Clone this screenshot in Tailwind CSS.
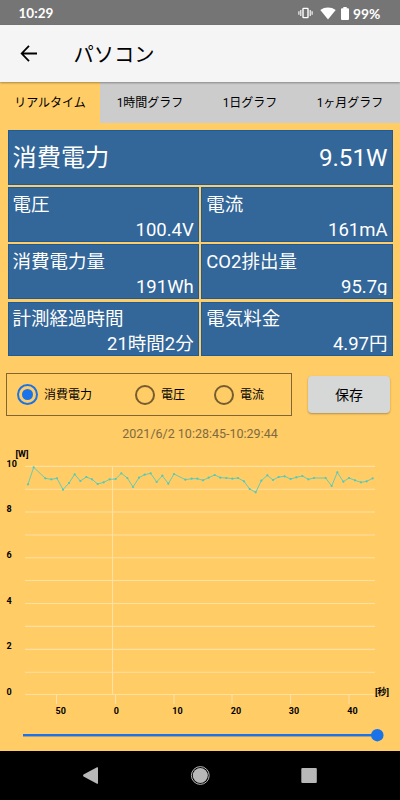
<!DOCTYPE html>
<html lang="ja">
<head>
<meta charset="utf-8">
<title>パソコン</title>
<script src="https://cdn.jsdelivr.net/npm/@tailwindcss/browser@4"></script>
</head>
<body class="w-[400px] h-[800px] overflow-hidden bg-[#ffcc66] flex flex-col font-[Roboto,'Noto_Sans_CJK_JP',sans-serif] text-black">
<header class="h-[25px] shrink-0 bg-[#757575] text-white flex items-center justify-between pl-[18.500px] pr-[18px] pt-[2px]">
  <span class="font-[Lato,sans-serif] font-bold text-[13.500px] leading-none">10:29</span>
  <div class="flex items-center">
    <svg class="w-[15px] h-[12px] mr-[7px]" viewBox="0 0 15 12" fill="none" stroke="#fff"><rect x="5" y="1.4" width="5" height="9.2" rx=".6" stroke-width="1.4"/><path d="M2.8 3v6M12.2 3v6M.9 4.3v3.4M14.1 4.3v3.4" stroke-width="1.1"/></svg>
    <svg class="w-[16px] h-[13px] mr-[5px]" viewBox="0 0 16 13" fill="#fff"><path d="M.3 3C4.8-.3 11.2-.3 15.700 3L8 12.500z"/></svg>
    <svg class="w-[8px] h-[13px] mr-[4px]" viewBox="0 0 8 13" fill="#fff"><path d="M2.300 0h3.400v1.300H7q1 0 1 1V12q0 1-1 1H1q-1 0-1-1V2.300q0-1 1-1h1.300z"/></svg>
    <span class="font-[Lato,sans-serif] font-bold text-[13.800px] leading-none w-[29px] whitespace-nowrap">99%</span>
  </div>
</header>
<div class="h-[57px] shrink-0 bg-[#f5f5f5] flex items-center pl-[20px] shadow-[0_1px_2px_rgba(0,0,0,.35)] relative">
  <svg class="w-[17px] h-[17px] mr-[36.500px]" viewBox="0 0 17 17" fill="none" stroke="#000" stroke-width="1.8"><path d="M9 .9L1.700 8.500L9 16.100M1.700 8.500H17"/></svg>
  <h1 class="text-[20.300px] leading-none pt-[3px]">パソコン</h1>
</div>
<nav class="h-[41px] shrink-0 grid grid-cols-4 bg-[#cccccc] text-[12px] leading-[42px] text-center">
  <span class="bg-[#ffcc66]">リアルタイム</span><span>1時間グラフ</span><span>1日グラフ</span><span>1ヶ月グラフ</span>
</nav>
<section class="mt-[7px] mx-[7.500px] shrink-0 grid grid-cols-2 gap-[2.500px] grid-rows-[54.700px_54.700px_54.700px_54.700px] text-white text-[18.500px]">
  <div class="col-span-2 bg-[#336699] border border-[#1d5c98] flex items-center justify-between px-[4px] pt-[2px] text-[24.200px] leading-none"><span>消費電力</span><span>9.51W</span></div>
  <div class="bg-[#336699] border border-[#1d5c98] px-[4px] pt-[5px] flex flex-col leading-[25px] overflow-hidden"><span>電圧</span><span class="text-right">100.4V</span></div>
  <div class="bg-[#336699] border border-[#1d5c98] px-[4px] pt-[5px] flex flex-col leading-[25px] overflow-hidden"><span>電流</span><span class="text-right">161mA</span></div>
  <div class="bg-[#336699] border border-[#1d5c98] px-[4px] pt-[5px] flex flex-col leading-[25px] overflow-hidden"><span>消費電力量</span><span class="text-right">191Wh</span></div>
  <div class="bg-[#336699] border border-[#1d5c98] px-[4px] pt-[5px] flex flex-col leading-[25px] overflow-hidden"><span>CO2排出量</span><span class="text-right h-[20px] overflow-hidden">95.7g</span></div>
  <div class="bg-[#336699] border border-[#1d5c98] px-[4px] pt-[4.500px] flex flex-col leading-[25px] overflow-hidden"><span>計測経過時間</span><span class="text-right">21時間2分</span></div>
  <div class="bg-[#336699] border border-[#1d5c98] px-[4px] pt-[4.500px] flex flex-col leading-[25px] overflow-hidden"><span>電気料金</span><span class="text-right">4.97円</span></div>
</section>
<section class="mt-[17px] h-[43px] shrink-0 flex items-center pl-[6px] pr-[10px] justify-between">
  <div class="w-[286px] h-[43px] border-[1.500px] border-[#806633] flex items-center text-[12px] leading-none">
    <div class="flex items-center pl-[10px] w-[118px]"><span class="size-[21px] rounded-full border-2 border-[#1a73e8] flex items-center justify-center mr-[6px]"><i class="size-[11px] rounded-full bg-[#1a73e8]"></i></span><span class="pt-[1px]">消費電力</span></div>
    <div class="flex items-center pl-[10px] w-[79px]"><span class="size-[20px] rounded-full border-2 border-[#755d2f] mr-[6px]"></span><span class="pt-[1px]">電圧</span></div>
    <div class="flex items-center pl-[10px]"><span class="size-[20px] rounded-full border-2 border-[#755d2f] mr-[6px]"></span><span class="pt-[1px]">電流</span></div>
  </div>
  <button class="w-[82px] h-[37px] rounded-[4px] bg-[#d6d7d7] text-[14px] leading-none shadow-[0_1px_2px_rgba(0,0,0,.3)]">保存</button>
</section>
<p class="mt-[10px] h-[16px] shrink-0 text-center text-[12.500px] leading-[16px] text-[#806a40]">2021/6/2 10:28:45-10:29:44</p>
<svg class="w-[400px] h-[280px] shrink-0 font-[Roboto,'Noto_Sans_CJK_JP',sans-serif]" viewBox="0 442 400 280">
  <g stroke="#ffe0a3" stroke-width="1.100" fill="none">
    <path d="M25 466.400H375M25 489.200H375M25 512H375M25 535H375M25 557.700H375M25 580.500H375M25 603.500H375M25 626.400H375M25 649.400H375M25 672.300H375M25 694.500H375M112.500 466V695"/>
    <path d="M56.500 695v9M115.500 695v9M174 695v9M232 695v9M290.500 695v9M349 695v9"/>
  </g>
  <g transform="translate(0 365) scale(.33333)">
    <polyline id="trace" fill="none" stroke="#66cdb2" stroke-width="3" points="84,358 101,307 136,340 154,343 171,340 189,374 207,354 224,328 241,348 259,336 276,343 293,357 311,352 329,343 347,342 364,325 382,339 399,366 417,338 434,329 452,325 470,351 487,332 505,356 522,327 556,344 575,341 592,341 609,346 626,338 644,330 661,338 679,339 697,341 714,339 732,349 749,372 767,382 784,347 802,331 819,345 836,336 854,334 872,342 889,337 907,333 925,343 942,339 977,339 995,363 1012,322 1030,350 1047,339 1065,346 1083,352 1100,349 1118,340"/>
    <g id="dots" fill="#50c8c0"></g>
  </g>
  <g font-size="9" font-weight="700" fill="#000">
    <text x="15.500" y="457">[W]</text>
    <text x="6.500" y="466.500">10</text><text x="6.500" y="512">8</text><text x="6.500" y="558">6</text><text x="6.500" y="603.500">4</text><text x="6.500" y="649">2</text><text x="6.500" y="695">0</text>
    <text x="375" y="695">[秒]</text>
    <g text-anchor="middle"><text x="60.700" y="713.500">50</text><text x="116.300" y="713.500">0</text><text x="177.500" y="713.500">10</text><text x="236" y="713.500">20</text><text x="294" y="713.500">30</text><text x="352.500" y="713.500">40</text></g>
  </g>
</svg>
<svg class="w-[400px] h-[29px] shrink-0" viewBox="0 0 400 29"><path d="M23 14.500H377" stroke="#aaa184" stroke-width="1"/><path d="M23 13H377" stroke="#1a73e8" stroke-width="2.200"/><circle cx="377.300" cy="13.200" r="6.200" fill="#1a73e8"/></svg>
<footer class="h-[49px] shrink-0 bg-black">
  <svg class="w-[400px] h-[49px]" viewBox="0 0 400 49" fill="#b8b8b8"><path d="M83.500 23.600Q82.500 24.500 83.500 25.400L97 32.700Q98 33.200 98 32V17Q98 15.800 97 16.300z"/><circle cx="200.300" cy="24.500" r="7.500"/><circle cx="200.300" cy="24.500" r="8.900" fill="none" stroke="#b8b8b8"/><rect x="301.300" y="17" width="15.500" height="15" rx="1"/></svg>
</footer>
<script>
  const dots = document.getElementById('dots');
  for (const p of document.getElementById('trace').points) {
    const c = document.createElementNS('http://www.w3.org/2000/svg', 'circle');
    c.setAttribute('cx', p.x); c.setAttribute('cy', p.y); c.setAttribute('r', 3.3);
    dots.appendChild(c);
  }
</script>
</body>
</html>
